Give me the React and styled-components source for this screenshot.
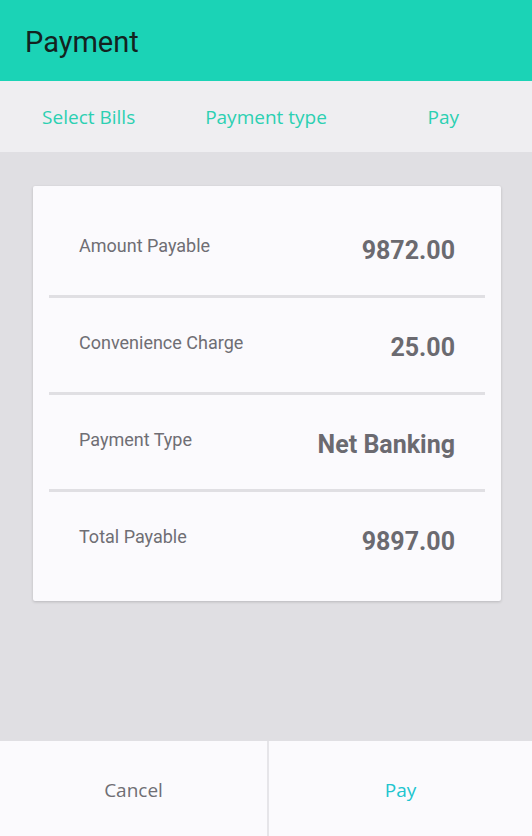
import React from "react";
import styled, { createGlobalStyle } from "styled-components";

const GlobalStyle = createGlobalStyle`
    html, body {
        margin: 0;
        padding: 0;
        background: #e0dfe3;
    }
    #root {
        height: 836px;
    }
`;

const rows = [
    { label: "Amount Payable", value: "9872.00" },
    { label: "Convenience Charge", value: "25.00" },
    { label: "Payment Type", value: "Net Banking" },
    { label: "Total Payable", value: "9897.00" },
];

const tabs = ["Select Bills", "Payment type", "Pay"];

const App = () => {
    return (
        <Screen>
            <GlobalStyle />
            <Header>
                <Title>Payment</Title>
            </Header>
            <Tabs>
                {tabs.map((t) => (
                    <Tab key={t}>{t}</Tab>
                ))}
            </Tabs>
            <Content>
                <Card>
                    {rows.map((r, index) => (
                        <Row key={r.label} last={index === rows.length - 1}>
                            <Label>{r.label}</Label>
                            <Value>{r.value}</Value>
                        </Row>
                    ))}
                </Card>
            </Content>
            <Footer>
                <Action>Cancel</Action>
                <Action primary>Pay</Action>
            </Footer>
        </Screen>
    );
};

const Screen = styled.div`
    width: 532px;
    height: 836px;
    display: flex;
    flex-direction: column;
    overflow: hidden;
`;

const Header = styled.div`
    height: 81px;
    background: #1bd3b6;
    display: flex;
    align-items: center;
    padding-left: 25px;
    padding-top: 3px;
    box-sizing: border-box;
`;

const Title = styled.h1`
    margin: 0;
    font-family: Roboto, "Liberation Sans", sans-serif;
    font-weight: 400;
    font-size: 29px;
    color: #13231f;
`;

const Tabs = styled.div`
    height: 71px;
    background: #efeef1;
    display: grid;
    grid-template-columns: repeat(3, 1fr);
    align-items: center;
`;

const Tab = styled.div`
    text-align: center;
    font-family: "Open Sans", "Liberation Sans", sans-serif;
    font-size: 19px;
    color: #2cd0b2;
`;

const Content = styled.div`
    flex: 1;
    background: #e0dfe3;
    padding: 34px 31px 0 33px;
`;

const Card = styled.div`
    background: #fbfafd;
    border-radius: 2px;
    box-shadow: 0 1px 3px rgba(0, 0, 0, 0.18);
    padding: 15px 16px 15px;
`;

const Row = styled.div`
    height: 94px;
    display: flex;
    align-items: center;
    justify-content: space-between;
    padding: 0 30px 0 30px;
    border-bottom: ${(p) => (p.last ? "none" : "3px solid #e0dfe3")};
`;

const Label = styled.div`
    font-family: Roboto, "Liberation Sans", sans-serif;
    font-size: 18px;
    color: #6f6e74;
    margin-top: -6px;
`;

const Value = styled.div`
    font-family: Roboto, "Liberation Sans", sans-serif;
    font-weight: 700;
    font-size: 25px;
    color: #6b6a70;
    margin-top: 4px;
`;

const Footer = styled.div`
    height: 95px;
    background: #fbfafd;
    display: grid;
    grid-template-columns: 267px 1fr;
`;

const Action = styled.div`
    display: flex;
    align-items: center;
    justify-content: center;
    padding-top: 2px;
    font-family: "Open Sans", "Liberation Sans", sans-serif;
    font-size: 19px;
    color: ${(p) => (p.primary ? "#21c5cf" : "#6f6e74")};
    border-left: ${(p) => (p.primary ? "2px solid #e6e5e9" : "none")};
`;

export default App;
